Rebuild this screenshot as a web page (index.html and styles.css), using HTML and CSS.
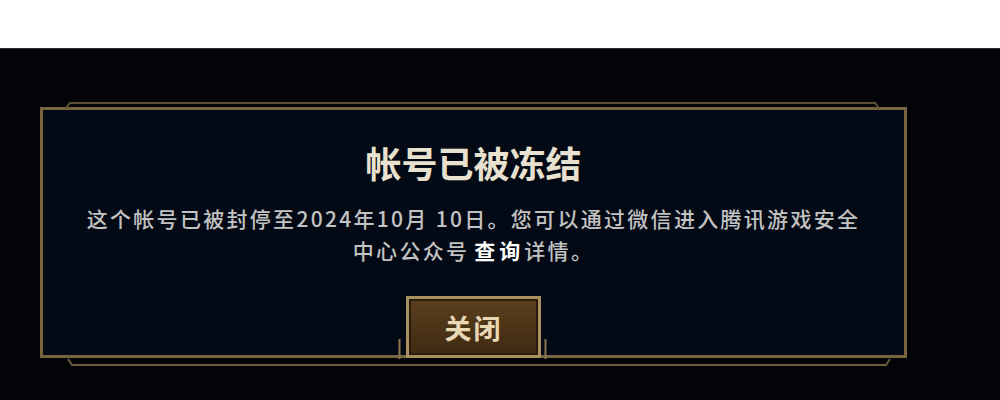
FILE: index.html
```html
<!DOCTYPE html>
<html lang="zh-CN">
<head>
    <meta charset="UTF-8">
    <meta name="viewport" content="width=device-width, initial-scale=1.0">
    <title>帐号已被冻结</title>
    <link rel="stylesheet" href="styles.css">
</head>
<body>

<div class="topbar"></div>

<div class="stage">
    <svg class="frame-lines" viewBox="0 0 1000 352" width="1000" height="352">
        <path d="M66 59 L70 54 L875 54 L879 59" fill="none" stroke="#5c5036" stroke-width="2"/>
        <path d="M68 310 L72 316 L886 316 L890 310" fill="none" stroke="#6b5b3b" stroke-width="2"/>
        <path d="M399.5 310 V290 M545.5 310 V290" fill="none" stroke="#8a7650" stroke-width="2"/>
    </svg>

    <div class="dialog">
        <h2 class="dialog-title">帐号已被冻结</h2>
        <p class="dialog-text">这个帐号已被封停至2024年10月 10日。您可以通过微信进入腾讯游戏安全<br>中心公众号<span class="mark">查询</span>详情。</p>
        <button class="close-btn">关闭</button>
    </div>
</div>

</body>
</html>
```

FILE: styles.css
```css
body {
    margin: 0;
    padding: 0;
    background-color: #030407;
    font-family: "Noto Sans CJK SC", "Noto Sans", sans-serif;
    width: 1000px;
    height: 400px;
    overflow: hidden;
}
.topbar {
    height: 48px;
    background-color: #ffffff;
    border-bottom: 1px solid #2a2c30;
}
.stage {
    position: relative;
    height: 351px;
    padding: 58px 0 0 40px;
    box-sizing: border-box;
}
.frame-lines {
    position: absolute;
    top: 0;
    left: 0;
    z-index: 1;
    pointer-events: none;
}
.dialog {
    position: relative;
    width: 867px;
    height: 251px;
    box-sizing: border-box;
    border: 3px solid #76653f;
    background-color: #040a15;
    display: flex;
    flex-direction: column;
    align-items: center;
    padding-top: 32px;
}
.dialog-title {
    margin: 0;
    font-size: 36px;
    line-height: 40px;
    font-weight: bold;
    color: #e9e1cf;
    letter-spacing: 0;
}
.dialog-text {
    margin: 20px 0 0 0;
    font-size: 21px;
    line-height: 32px;
    font-weight: 500;
    color: #c2c2c2;
    text-align: center;
    letter-spacing: 2.3px;
}
.mark {
    color: #ffffff;
    font-weight: bold;
    letter-spacing: 4px;
    margin-left: 5px;
}
.close-btn {
    margin-top: auto;
    margin-bottom: -3px;
    width: 135px;
    height: 62px;
    box-sizing: border-box;
    border: 3px solid #a8905f;
    box-shadow: inset 0 0 0 2px #2a1c0c;
    background: linear-gradient(#5a3f1e, #3e2a12);
    color: #e8d8b4;
    font-family: "Noto Sans CJK SC", sans-serif;
    font-size: 27px;
    font-weight: bold;
    letter-spacing: 2px;
    cursor: pointer;
}
```
